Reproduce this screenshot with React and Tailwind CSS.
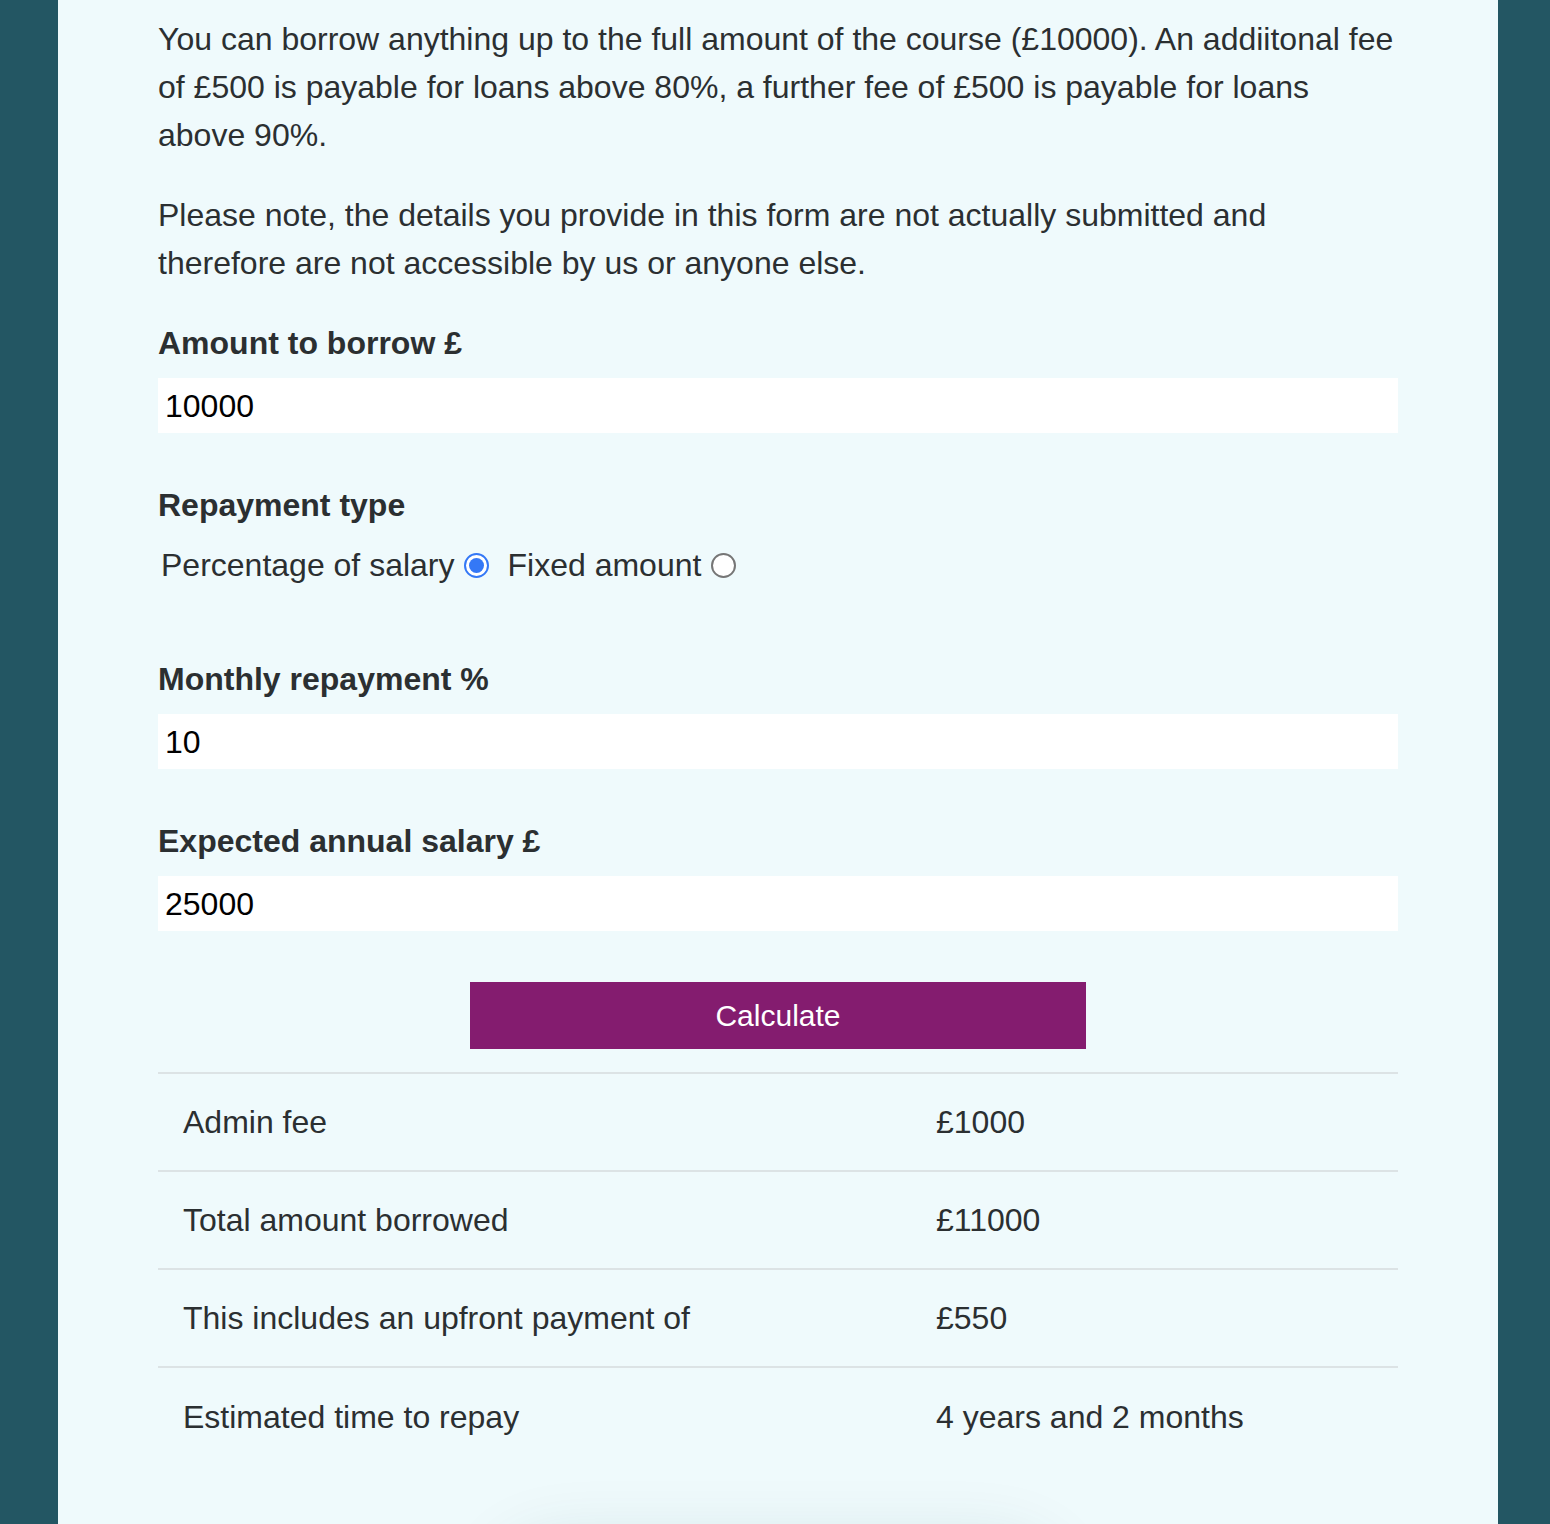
import React, { useState } from 'react'

const rows = [
  ['Admin fee', '£1000'],
  ['Total amount borrowed', '£11000'],
  ['This includes an upfront payment of', '£550'],
  ['Estimated time to repay', '4 years and 2 months'],
]

function Radio({ checked }) {
  return checked ? (
    <span className="inline-flex w-[25px] h-[25px] rounded-full border-[2px] border-[#3478f6] bg-white items-center justify-center">
      <span className="w-[15px] h-[15px] rounded-full bg-[#3478f6]" />
    </span>
  ) : (
    <span className="inline-block w-[25px] h-[25px] rounded-full border-[2px] border-[#767676] bg-white" />
  )
}

function Field({ label, value, className = '' }) {
  return (
    <div className={className}>
      <div className="font-bold leading-[48px]">{label}</div>
      <div className="mt-[11px] h-[55px] bg-white flex items-center px-[7px] text-black">{value}</div>
    </div>
  )
}

export default function App() {
  const [type, setType] = useState('percent')

  return (
    <div className="min-h-screen bg-[#235663] font-['Liberation_Sans',Arial,sans-serif]">
      <div className="ml-[58px] w-[1440px] min-h-screen bg-[#effafc] px-[100px] pt-[15px] pb-[200px] text-[32px] leading-[48px] text-[#2b2f31] overflow-hidden">
        <p>
          You can borrow anything up to the full amount of the course (£10000). An addiitonal fee of £500 is payable for loans above 80%, a further fee of £500 is payable for loans above 90%.
        </p>
        <p className="mt-[32px]">
          Please note, the details you provide in this form are not actually submitted and therefore are not accessible by us or anyone else.
        </p>

        <Field label="Amount to borrow £" value="10000" className="mt-[32px]" />

        <div className="mt-[48px]">
          <div className="font-bold">Repayment type</div>
          <div className="mt-[12px] flex items-center pl-[3px]">
            <label className="flex items-center cursor-pointer" onClick={() => setType('percent')}>
              <span>Percentage of salary</span>
              <span className="ml-[9px] flex"><Radio checked={type === 'percent'} /></span>
            </label>
            <label className="flex items-center ml-[19px] cursor-pointer" onClick={() => setType('fixed')}>
              <span>Fixed amount</span>
              <span className="ml-[10px] flex"><Radio checked={type === 'fixed'} /></span>
            </label>
          </div>
        </div>

        <Field label="Monthly repayment %" value="10" className="mt-[66px]" />
        <Field label="Expected annual salary £" value="25000" className="mt-[48px]" />

        <div className="mt-[51px] flex justify-center">
          <button className="w-[616px] h-[67px] bg-[#841c6f] text-white text-[30px]">Calculate</button>
        </div>

        <table className="mt-[23px] w-full border-collapse">
          <tbody>
            {rows.map(([k, v]) => (
              <tr key={k} className="border-t-[2px] border-[#dce3e5]">
                <td className="w-[754px] h-[98px] pl-[25px]">{k}</td>
                <td className="h-[98px] pl-[24px]">{v}</td>
              </tr>
            ))}
          </tbody>
        </table>

        <div className="mt-[80px] mx-auto w-[560px] h-[200px] rounded-[60px] bg-[#effafc] shadow-[0_0_70px_rgba(20,70,80,0.14)]" />
      </div>
    </div>
  )
}
